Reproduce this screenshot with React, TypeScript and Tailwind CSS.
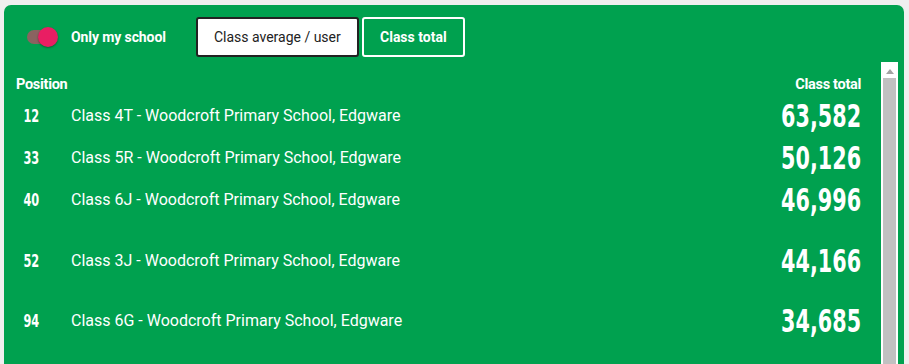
import React from "react";

const rows = [
  { pos: 12, name: "Class 4T - Woodcroft Primary School, Edgware", total: "63,582", h: "h-[42px]" },
  { pos: 33, name: "Class 5R - Woodcroft Primary School, Edgware", total: "50,126", h: "h-[42px]" },
  { pos: 40, name: "Class 6J - Woodcroft Primary School, Edgware", total: "46,996", h: "h-[42px]" },
  { pos: 52, name: "Class 3J - Woodcroft Primary School, Edgware", total: "44,166", h: "h-[80px]" },
  { pos: 94, name: "Class 6G - Woodcroft Primary School, Edgware", total: "34,685", h: "h-[40px]" },
];

const numFont = "font-['DejaVu_Sans_Condensed','Liberation_Sans',sans-serif]";

export default function App() {
  return (
    <div className="h-[364px] w-[909px] overflow-hidden bg-[#efefef] pt-[5px] pl-[4px] pr-[5px] font-['Roboto',sans-serif]">
      <div className="h-[400px] rounded-t-[7px] bg-[#00a14f] text-white">
        {/* toolbar */}
        <div className="flex h-[57px] items-start pt-[12px]">
          <div className="flex h-[40px] items-center pl-[23px]">
            <div className="relative h-[14px] w-[22px] rounded-full bg-[#8a6360]">
              <div className="absolute top-[-3px] left-[11px] h-[20px] w-[20px] rounded-full bg-[#e91e63] shadow-[0_1px_2px_rgba(0,0,0,0.35)]" />
            </div>
            <span className="ml-[22px] text-[14px] font-bold tracking-[-0.1px]">Only my school</span>
          </div>
          <div className="ml-[30px] flex gap-[3px]">
            <button className="h-[40px] w-[163px] rounded-[3px] border-2 border-[#222] bg-white text-[14px] text-[#222]">
              Class average / user
            </button>
            <button className="h-[40px] w-[103px] rounded-[3px] border-2 border-white bg-[#00a14f] text-[14px] font-bold text-white">
              Class total
            </button>
          </div>
        </div>
        {/* list */}
        <div className="flex">
          <div className="flex-1 pl-[12px] pr-[20px]">
            <div className="flex h-[33px] items-end justify-between text-[14.5px] font-bold tracking-[-0.3px]">
              <span className="relative top-[1px]">Position</span>
              <span className="relative top-[1px]">Class total</span>
            </div>
            {rows.map((r) => (
              <div key={r.pos} className={`flex items-center ${r.h}`}>
                <div className="flex w-[30px] justify-center">
                  <span className={`inline-block origin-center scale-x-[0.7] text-[18px] leading-none font-black ${numFont}`}>
                    {r.pos}
                  </span>
                </div>
                <div className="ml-[25px] flex-1 text-[16px]">{r.name}</div>
                <div className={`origin-right scale-x-[0.72] text-[32px] leading-none font-black ${numFont}`}>
                  {r.total}
                </div>
              </div>
            ))}
          </div>
          <div className="w-[17px] bg-white pt-[2px]">
            <div className="flex h-[14px] items-center justify-center">
              <svg width="8" height="5" viewBox="0 0 8 5">
                <path d="M4 0 L8 5 L0 5 Z" fill="#a3a3a3" />
              </svg>
            </div>
            <div className="mx-auto h-[320px] w-[13px] bg-[#c1c1c1]" />
          </div>
          <div className="w-[6px]" />
        </div>
      </div>
    </div>
  );
}
